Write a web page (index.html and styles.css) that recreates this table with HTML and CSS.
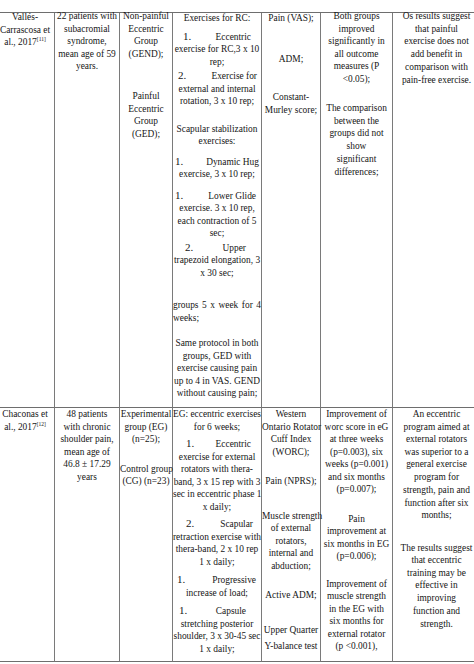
FILE: index.html
```html
<!DOCTYPE html>
<html lang="en">
<head>
<meta charset="utf-8">
<title>Studies table</title>
<link rel="stylesheet" href="styles.css">
</head>
<body>
<div class="table">
  <!-- Row 1 -->
  <div class="cell r1 c1">
    <p class="g-n2">Vallés-<br>Carrascosa et<br>al., 2017<sup>[11]</sup></p>
  </div>
  <div class="cell r1 c2">
    <p class="g-n3">22 patients with<br>subacromial<br>syndrome,<br>mean age of 59<br>years.</p>
  </div>
  <div class="cell r1 c3">
    <p class="g-n3">Non-painful<br>Eccentric<br>Group<br>(GEND);</p>
    <p class="g-30">Painful<br>Eccentric<br>Group<br>(GED);</p>
  </div>
  <div class="cell r1 c4">
    <p class="g-n1">Exercises for RC:</p>
    <div class="item g-5">
      <div class="nl pl-10 pr-10"><span class="num">1.</span><span>Eccentric</span></div>
      <p>exercise for RC,3 x 10<br>rep;</p>
    </div>
    <div class="item g-1">
      <div class="nl pl-5 pr-4"><span class="num">2.</span><span>Exercise for</span></div>
      <p>external and internal<br>rotation, 3 x 10 rep;</p>
    </div>
    <p class="g-15">Scapular stabilization<br>exercises:</p>
    <div class="item g-7">
      <div class="nl pl-2 pr-2"><span class="num">1.</span><span>Dynamic Hug</span></div>
      <p>exercise, 3 x 10 rep;</p>
    </div>
    <div class="item g-8">
      <div class="nl pl-2 pr-5"><span class="num">1.</span><span>Lower Glide</span></div>
      <p>exercise. 3 x 10 rep,<br>each contraction of 5<br>sec;</p>
    </div>
    <div class="item g-1">
      <div class="nl pl-12 pr-15"><span class="num">2.</span><span>Upper</span></div>
      <p>trapezoid elongation, 3<br>x 30 sec;</p>
    </div>
    <p class="left g-20"><span class="just">groups 5 x week for 4</span>weeks;</p>
    <p class="g-13">Same protocol in both<br>groups, GED with<br>exercise causing pain<br>up to 4 in VAS. GEND<br>without causing pain;</p>
  </div>
  <div class="cell r1 c5">
    <p class="g-n1">Pain (VAS);</p>
    <p class="g-28">ADM;</p>
    <p class="g-26">Constant-<br>Murley score;</p>
  </div>
  <div class="cell r1 c6">
    <p class="g-n3">Both groups<br>improved<br>significantly in<br>all outcome<br>measures (P<br>&lt;0.05);</p>
    <p class="g-17">The comparison<br>between the<br>groups did not<br>show</p>
    <p class="g-1">significant<br>differences;</p>
  </div>
  <div class="cell r1 c7">
    <p class="g-n3">Os results suggest<br>that painful<br>exercise does not<br>add benefit in</p>
    <p class="g-1">comparison with<br>pain-free exercise.</p>
  </div>

  <!-- Row 2 -->
  <div class="cell r2 c1">
    <p>Chaconas et<br>al., 2017<sup>[12]</sup></p>
  </div>
  <div class="cell r2 c2">
    <p>48 patients<br>with chronic<br>shoulder pain,<br>mean age of<br>46.8 ± 17.29<br>years</p>
  </div>
  <div class="cell r2 c3">
    <p>Experimental<br>group (EG)<br>(n=25);</p>
    <p class="g-17">Control group<br>(CG) (n=23)</p>
  </div>
  <div class="cell r2 c4">
    <p>EG: eccentric exercises<br>for 6 weeks;</p>
    <div class="item g-4">
      <div class="nl pl-13 pr-10"><span class="num">1.</span><span>Eccentric</span></div>
      <p>exercise for external<br>rotators with thera-<br>band, 3 x 15 rep with 3<br>sec in eccentric phase 1<br>x daily;</p>
    </div>
    <div class="item g-4">
      <div class="nl pl-13 pr-8"><span class="num">2.</span><span>Scapular</span></div>
      <p>retraction exercise with<br>thera-band, 2 x 10 rep<br>1 x daily;</p>
    </div>
    <div class="item g-5">
      <div class="nl pl-4 pr-5"><span class="num">1.</span><span>Progressive</span></div>
      <p>increase of load;</p>
    </div>
    <div class="item g-5">
      <div class="nl pl-6 pr-15"><span class="num">1.</span><span>Capsule</span></div>
      <p>stretching posterior<br>shoulder, 3 x 30-45 sec<br>1 x daily;</p>
    </div>
  </div>
  <div class="cell r2 c5">
    <p>Western<br>Ontario Rotator<br>Cuff Index<br>(WORC);</p>
    <p class="g-17">Pain (NPRS);</p>
    <p class="g-22">Muscle strength<br>of external<br>rotators,<br>internal and<br>abduction;</p>
    <p class="g-17">Active ADM;</p>
    <p class="g-22">Upper Quarter</p>
    <p class="g-4">Y-balance test</p>
  </div>
  <div class="cell r2 c6">
    <p>Improvement of<br>worc score in eG<br>at three weeks<br>(p=0.003), six<br>weeks (p=0.001)<br>and six months<br>(p=0.007);</p>
    <p class="g-17">Pain<br>improvement at<br>six months in EG<br>(p=0.006);</p>
    <p class="g-15">Improvement of<br>muscle strength<br>in the EG with<br>six months for<br>external rotator<br>(p &lt;0.001),</p>
  </div>
  <div class="cell r2 c7">
    <p>An eccentric<br>program aimed at<br>external rotators<br>was superior to a<br>general exercise<br>program for</p>
    <p class="g-1">strength, pain and<br>function after six<br>months;</p>
    <p class="g-20">The results suggest<br>that eccentric<br>training may be<br>effective in<br>improving</p>
    <p class="g-1">function and<br>strength.</p>
  </div>
</div>
</body>
</html>
```

FILE: styles.css
```css
html, body {
  margin: 0;
  padding: 0;
  background: #ffffff;
  overflow: hidden;
}

body {
  width: 474px;
  height: 664px;
  font-family: "Liberation Serif", "Times New Roman", serif;
  font-size: 9.4px;
  line-height: 12.5px;
  color: #161616;
}

.table {
  display: grid;
  grid-template-columns: 59px 65px 53px 89px 59px 72px 87px;
  grid-template-rows: 395px 254px;
  margin-top: 12px;
  margin-left: -4px;
  width: 484px;
  border-top: 1px solid #6e6e6e;
}

.cell {
  box-sizing: border-box;
  border-right: 1px solid #7a7a7a;
  border-bottom: 1px solid #6e6e6e;
  text-align: center;
  overflow: visible;
}

.c7 {
  border-right: none;
}

p {
  margin: 0;
  white-space: nowrap;
}

sup {
  font-size: 5.5px;
  line-height: 0;
  vertical-align: 4px;
}

.item {
  display: block;
}

.nl {
  display: flex;
  justify-content: space-between;
  align-items: baseline;
  white-space: nowrap;
}

.num {
  font-size: 11px;
}

.left {
  text-align: left;
}

.just {
  display: block;
  text-align: justify;
  text-align-last: justify;
}

/* number line insets */
.pl-2 { padding-left: 2px; }
.pl-4 { padding-left: 4px; }
.pl-5 { padding-left: 5px; }
.pl-6 { padding-left: 6px; }
.pl-10 { padding-left: 10px; }
.pl-12 { padding-left: 12px; }
.pl-13 { padding-left: 13px; }
.pr-2 { padding-right: 2px; }
.pr-4 { padding-right: 4px; }
.pr-5 { padding-right: 5px; }
.pr-8 { padding-right: 8px; }
.pr-10 { padding-right: 10px; }
.pr-15 { padding-right: 15px; }

/* vertical gaps between paragraphs */
.g-n3 { margin-top: -3px; }
.g-n2 { margin-top: -2px; }
.g-n1 { margin-top: -1px; }
.g-1 { margin-top: 1px; }
.g-2 { margin-top: 2px; }
.g-4 { margin-top: 4px; }
.g-5 { margin-top: 5px; }
.g-7 { margin-top: 7px; }
.g-8 { margin-top: 8px; }
.g-13 { margin-top: 13px; }
.g-15 { margin-top: 15px; }
.g-17 { margin-top: 17px; }
.g-18 { margin-top: 18px; }
.g-20 { margin-top: 20px; }
.g-22 { margin-top: 22px; }
.g-26 { margin-top: 26px; }
.g-28 { margin-top: 28px; }
.g-30 { margin-top: 30px; }
```
